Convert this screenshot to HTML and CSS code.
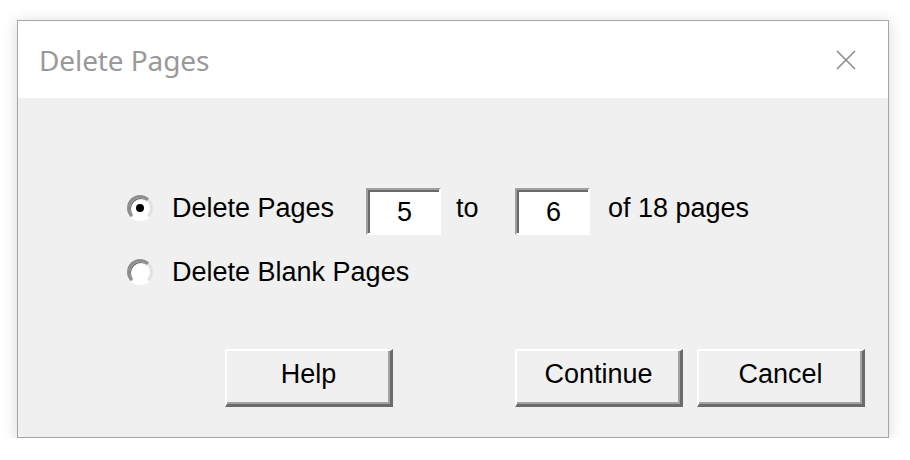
FILE: index.html
```html
<!DOCTYPE html>
<html>
<head>
<meta charset="utf-8">
<title>Delete Pages</title>
<link rel="stylesheet" href="styles.css">
</head>
<body>
<div class="dialog">
  <div class="titlebar">
    <span class="title">Delete Pages</span>
    <svg class="close" width="20" height="20" viewBox="0 0 20 20">
      <path d="M1 1 L19 19 M19 1 L1 19" stroke="#8c8c8c" stroke-width="1.6" fill="none"/>
    </svg>
  </div>
  <div class="content">
    <div class="row row-range">
      <span class="radio checked"><span class="dot"></span></span>
      <span class="text label">Delete Pages</span>
      <span class="field">5</span>
      <span class="text to">to</span>
      <span class="field">6</span>
      <span class="text of">of 18 pages</span>
    </div>
    <div class="row row-blank">
      <span class="radio"></span>
      <span class="text label">Delete Blank Pages</span>
    </div>
    <div class="buttons">
      <button class="btn btn-help">Help</button>
      <button class="btn btn-continue">Continue</button>
      <button class="btn">Cancel</button>
    </div>
  </div>
</div>
</body>
</html>
```

FILE: styles.css
```css
html, body {
  margin: 0;
  padding: 0;
  background: #ffffff;
}

body {
  padding: 20px 0 0 17px;
  font-family: "Liberation Sans", Arial, sans-serif;
}

.dialog {
  box-sizing: border-box;
  width: 872px;
  height: 418px;
  border: 1px solid #a6a6a6;
  background: #f0f0f0;
  box-shadow: 0 2px 14px rgba(0, 0, 0, 0.16);
  display: flex;
  flex-direction: column;
}

.titlebar {
  height: 77px;
  background: #ffffff;
  display: flex;
  align-items: center;
  justify-content: space-between;
  padding: 0 32px 0 21px;
}

.title {
  font-family: "Noto Sans", "Open Sans", sans-serif;
  font-size: 28px;
  color: #999999;
  letter-spacing: -0.1px;
}

.close {
  display: block;
}

.content {
  flex: 1;
  padding: 90px 0 0 109px;
  display: flex;
  flex-direction: column;
}

.row {
  display: flex;
  align-items: center;
}

.row-range {
  height: 47px;
}

.row-blank {
  height: 30px;
  margin-top: 22px;
}

.text {
  font-size: 27px;
  color: #000000;
  white-space: nowrap;
}

.row-range .text {
  margin-bottom: 6px;
}

.row-range .radio {
  margin-bottom: 8px;
}

.radio {
  box-sizing: border-box;
  width: 26px;
  height: 26px;
  border-radius: 50%;
  border: 3px solid;
  border-color: #8e8e8e #e2e2e2 #ffffff #8e8e8e;
  background: #ffffff;
  box-shadow: inset 1px 1px 0 #6a6a6a;
  display: flex;
  align-items: center;
  justify-content: center;
  margin-right: 19px;
  flex: none;
}

.dot {
  width: 8px;
  height: 8px;
  border-radius: 50%;
  background: #000000;
}

.row-range .label {
  width: 194px;
}

.field {
  box-sizing: border-box;
  width: 75px;
  height: 47px;
  background: #ffffff;
  border: 2px solid;
  border-color: #a0a0a0 #ffffff #ffffff #a0a0a0;
  box-shadow: inset 2px 2px 0 #6a6a6a;
  font-size: 27px;
  color: #000000;
  display: flex;
  align-items: center;
  justify-content: center;
  padding: 2px 0 0 2px;
  flex: none;
}

.to {
  width: 59px;
  padding-left: 15px;
}

.of {
  margin-left: 18px;
}

.buttons {
  display: flex;
  margin-top: 62px;
  padding-left: 98px;
}

.btn {
  box-sizing: border-box;
  width: 168px;
  height: 58px;
  margin: 0;
  padding: 0 0 6px 0;
  background: #f0f0f0;
  border-style: solid;
  border-width: 2px 3px 3px 2px;
  border-color: #ffffff #6b6b6b #6b6b6b #ffffff;
  box-shadow: inset -2px -2px 0 #a3a3a3;
  font-family: "Liberation Sans", Arial, sans-serif;
  font-size: 27px;
  color: #000000;
}

.btn-help {
  margin-right: 122px;
}

.btn-continue {
  margin-right: 14px;
}
```
